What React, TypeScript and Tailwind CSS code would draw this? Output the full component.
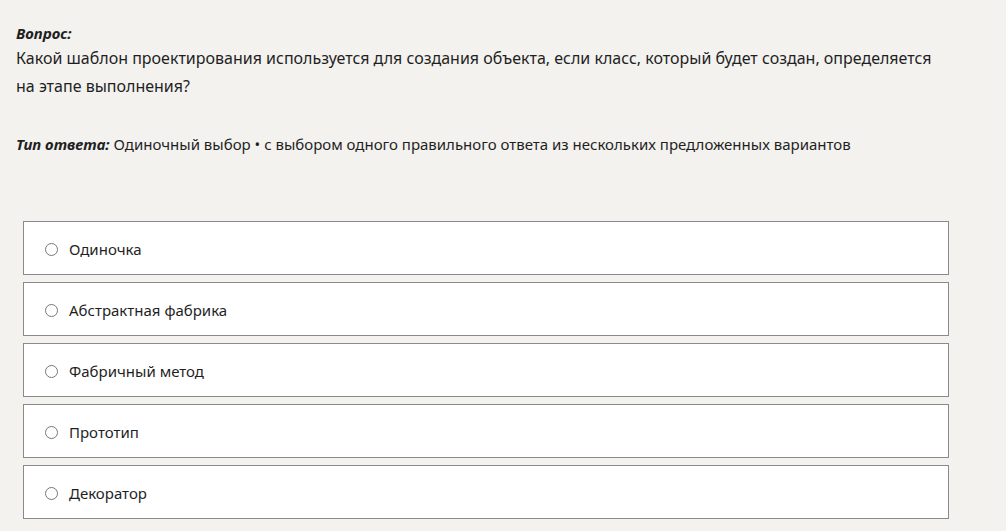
const options = ['Одиночка', 'Абстрактная фабрика', 'Фабричный метод', 'Прототип', 'Декоратор'];

export default function App() {
  return (
    <div className="w-[1006px] h-[531px] overflow-hidden bg-[#f3f2ef] text-[#1f1f1f] font-['Noto_Sans',sans-serif]">
      <div className="pl-4 pt-[22px]">
        <div className="text-[15px] leading-[22px] font-bold italic">Вопрос:</div>
        <p className="text-[16px] leading-[28px] w-[930px]">
          Какой шаблон проектирования используется для создания объекта, если класс, который будет создан, определяется на этапе выполнения?
        </p>
        <p className="mt-[32px] text-[15px] leading-[24px]">
          <span className="font-bold italic">Тип ответа:</span> Одиночный выбор • с выбором одного правильного ответа из нескольких предложенных вариантов
        </p>
      </div>
      <div className="ml-[23px] mt-[65px] w-[926px] flex flex-col gap-[7px]">
        {options.map((o) => (
          <label key={o} className="h-[54px] flex items-center gap-[11px] pl-[21px] pt-[3px] bg-white border border-[#8a8a8a]">
            <span className="w-[13px] h-[13px] rounded-full border border-[#777] bg-white" />
            <span className="text-[15px]">{o}</span>
          </label>
        ))}
      </div>
    </div>
  );
}
